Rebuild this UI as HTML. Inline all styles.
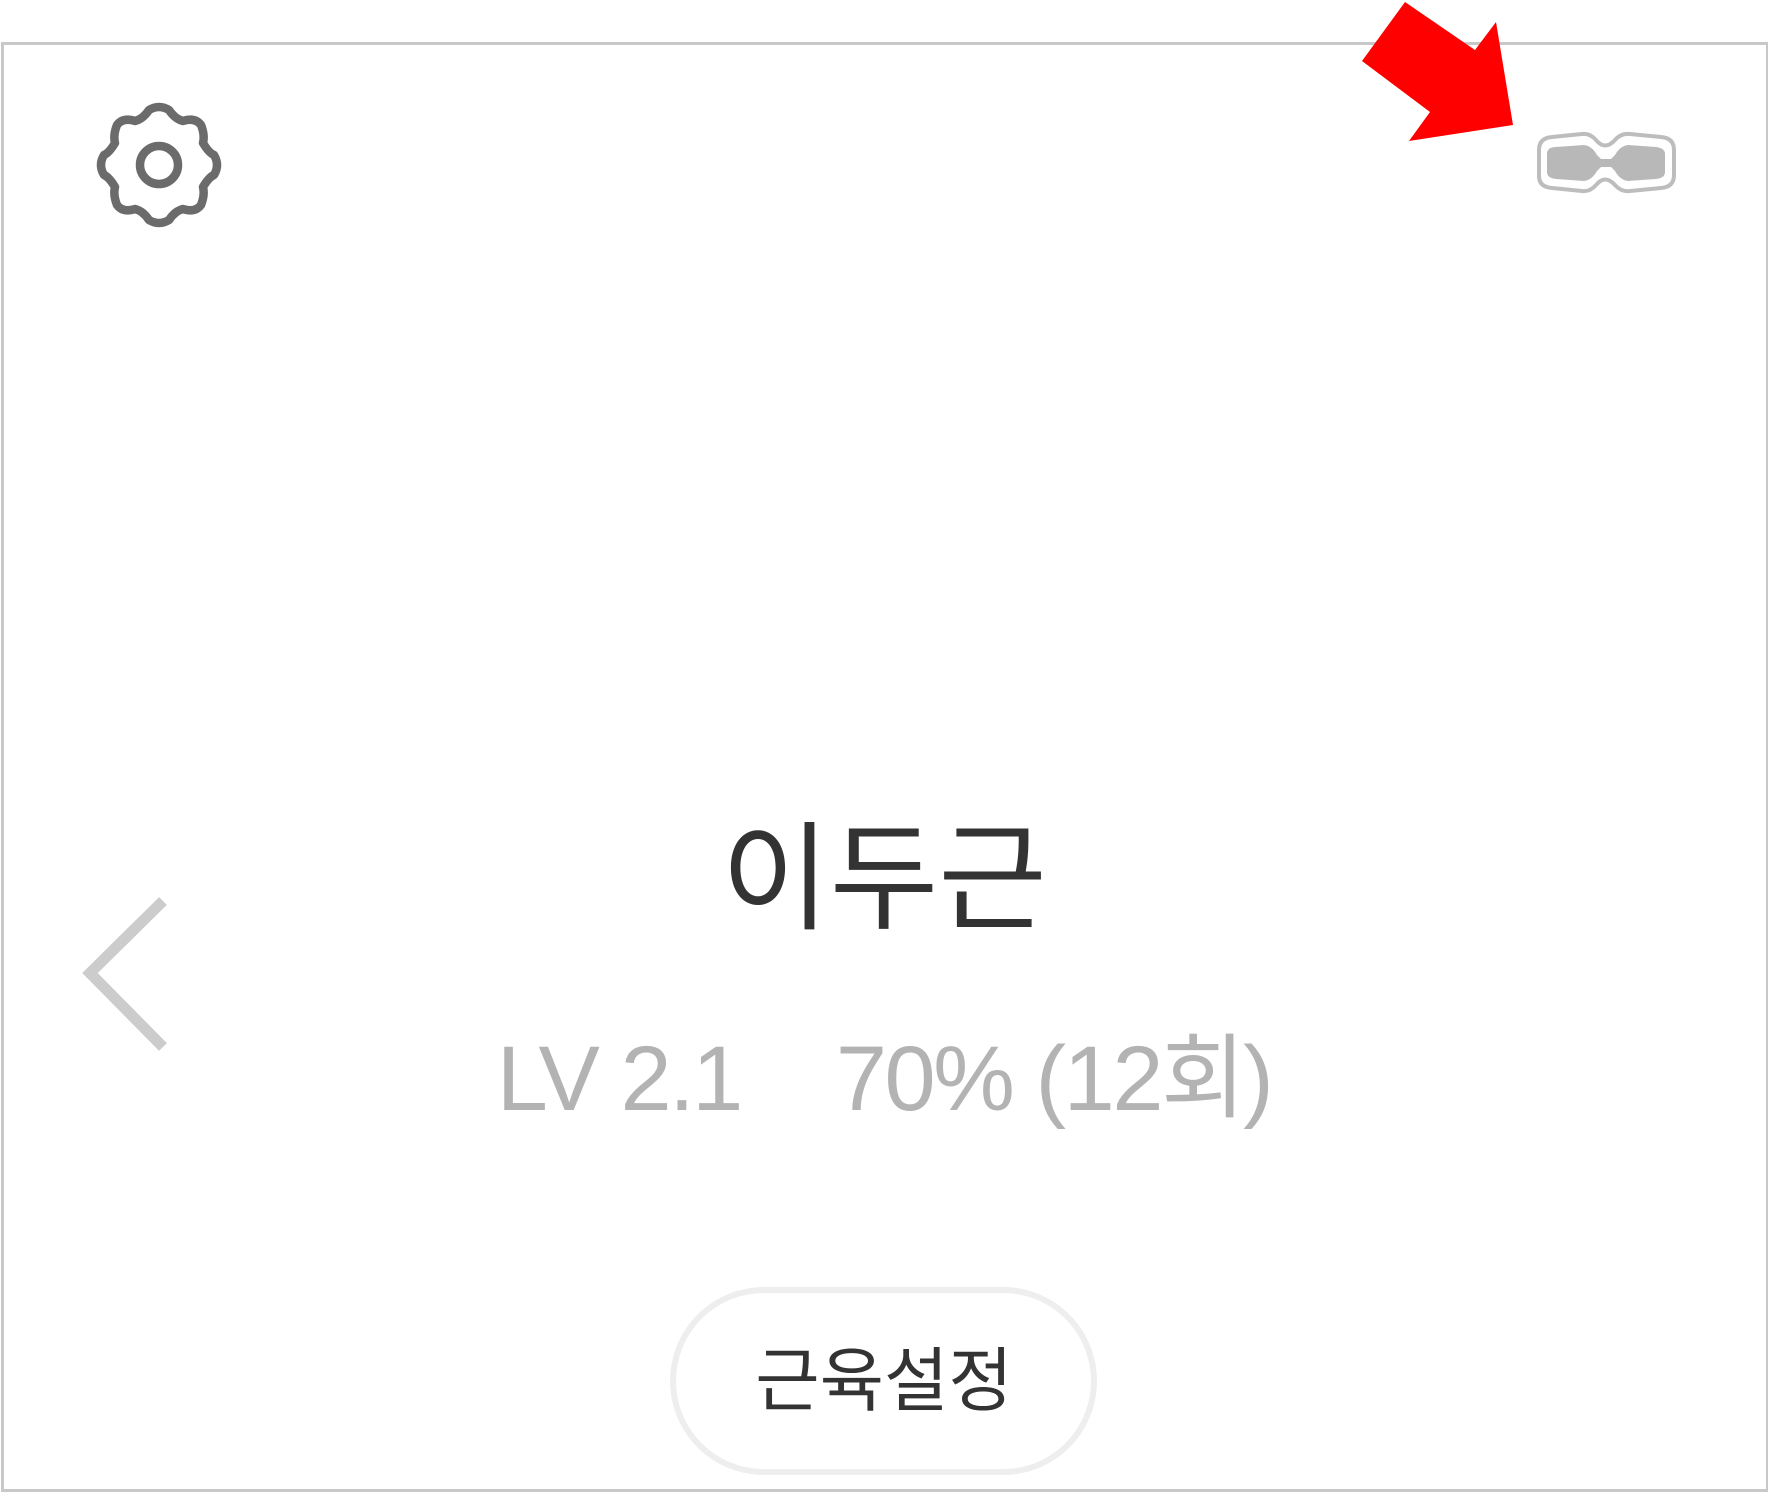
<!DOCTYPE html>
<html><head><meta charset="utf-8"><style>
html,body{margin:0;padding:0;background:#fff;width:1768px;height:1492px;overflow:hidden;position:relative}
.box{position:absolute;left:1px;top:42px;width:1762px;height:1444px;border:3px solid #c8c8c8;}
.t{position:absolute;left:0;width:1768px;text-align:center;white-space:nowrap}
</style></head><body>
<div class="box"></div>
<svg style="position:absolute;left:0;top:0" width="1768" height="1492">
 <g transform="translate(159,165)" fill="none" stroke="#6b6b6b" stroke-width="8.5">
  <path d="M -10 -55 Q 0 -61 10 -55 Q 16 -46 24 -44 Q 36 -48 42 -40 Q 46 -30 44 -22 Q 50 -12 55 -10 Q 61 0 55 10 Q 50 12 44 22 Q 46 30 42 40 Q 36 48 24 44 Q 16 46 10 55 Q 0 61 -10 55 Q -16 46 -24 44 Q -36 48 -42 40 Q -46 30 -44 22 Q -50 12 -55 10 Q -61 0 -55 -10 Q -50 -12 -44 -22 Q -46 -30 -42 -40 Q -36 -48 -24 -44 Q -16 -46 -10 -55 Z" stroke-linejoin="round"/>
  <circle r="19"/>
 </g>
 <polyline points="163,901 90,973 163,1047" fill="none" stroke="#cccccc" stroke-width="11"/>
 <polygon points="1362,61 1405,2 1475,50 1496,22 1513,125 1409,141 1430,112" fill="#ff0000"/>
 <g>
  <path d="M1539,150 Q1539,138 1552,137 L1582,134 Q1590,133 1596,140 Q1605,151 1615,140 Q1621,133 1630,134 L1661,137 Q1674,138 1674,150 L1674,175 Q1674,187 1661,188 L1630,191 Q1621,192 1615,185 Q1605,174 1596,185 Q1590,192 1582,191 L1552,188 Q1539,187 1539,176 Z" fill="#fff" stroke="#bdbdbd" stroke-width="4"/>
  <path d="M1547,154 Q1547,147 1556,147 L1584,145 Q1592,146 1597,155 L1601,159 L1611,159 L1615,155 Q1620,146 1628,145 L1656,147 Q1665,148 1665,154 L1665,172 Q1665,178 1656,179 L1628,181 Q1620,180 1615,171 L1611,167 L1601,167 L1597,171 Q1592,180 1584,181 L1556,179 Q1547,178 1547,172 Z" fill="#b8b8b8"/>
 </g>
 <rect x="673" y="1290" width="421" height="182" rx="91" fill="#fff" stroke="#eeeeee" stroke-width="6"/>
</svg>
<div class="t" style="top:800px;font:400 118px 'Liberation Sans','Noto Sans CJK KR',sans-serif;color:#333;line-height:160px">이두근</div>
<div class="t" style="top:1024px;font:400 92px 'Liberation Sans','Noto Sans CJK KR',sans-serif;color:#b3b3b3;line-height:110px;letter-spacing:-2.5px">LV 2.1<span style="display:inline-block;width:95px"></span>70% (12회)</div>
<div class="t" style="top:1336px;font:400 70px 'Liberation Sans','Noto Sans CJK KR',sans-serif;color:#333;line-height:90px">근육설정</div>
</body></html>
